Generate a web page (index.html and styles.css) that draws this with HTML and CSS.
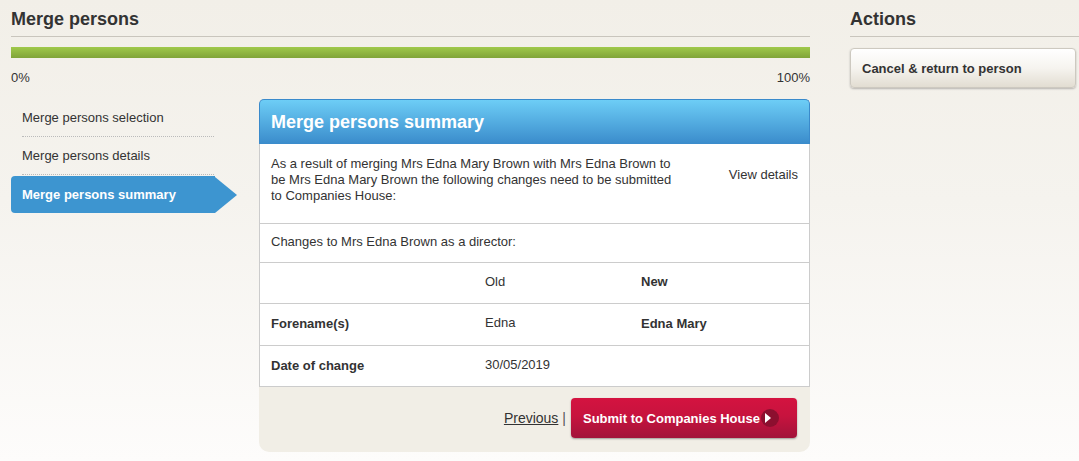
FILE: index.html
```html
<!DOCTYPE html>
<html>
<head>
<meta charset="utf-8">
<link rel="stylesheet" href="styles.css">
</head>
<body>
<div class="page">
  <div class="main">
    <h1 class="heading">Merge persons</h1>
    <div class="progress"><div class="progress-fill"></div></div>
    <div class="progress-labels"><span>0%</span><span>100%</span></div>
    <div class="content">
      <ul class="steps">
        <li class="step"><span class="step-text">Merge persons selection</span></li>
        <li class="step"><span class="step-text">Merge persons details</span></li>
        <li class="step step-active"><span class="step-text">Merge persons summary</span><span class="step-arrow"></span></li>
      </ul>
      <div class="panel">
        <div class="panel-head">Merge persons summary</div>
        <div class="panel-body">
          <div class="intro">
            <p class="intro-text">As a result of merging Mrs Edna Mary Brown with Mrs Edna Brown to be Mrs Edna Mary Brown the following changes need to be submitted to Companies House:</p>
            <a class="view-details">View details</a>
          </div>
          <div class="changes-title">Changes to Mrs Edna Brown as a director:</div>
          <div class="trow">
            <div class="c1"></div><div class="c2">Old</div><div class="c3 b">New</div>
          </div>
          <div class="trow">
            <div class="c1 b">Forename(s)</div><div class="c2">Edna</div><div class="c3 b">Edna Mary</div>
          </div>
          <div class="trow last">
            <div class="c1 b">Date of change</div><div class="c2">30/05/2019</div><div class="c3"></div>
          </div>
        </div>
        <div class="panel-foot">
          <a class="prev">Previous</a><span class="sep">|</span>
          <button class="submit">Submit to Companies House<span class="submit-icon"><svg width="8" height="10" viewBox="0 0 8 10"><polygon points="1,0 7,5 1,10" fill="#fff"/></svg></span></button>
        </div>
      </div>
    </div>
  </div>
  <div class="side">
    <h2 class="heading">Actions</h2>
    <button class="cancel">Cancel &amp; return to person</button>
  </div>
</div>
</body>
</html>
```
FILE: styles.css
```css
html, body {
  margin: 0;
  padding: 0;
}
body {
  font-family: "Liberation Sans", Arial, sans-serif;
  font-size: 13px;
  color: #333;
  background: linear-gradient(#f2efe8 0, #f5f3ee 200px, #fdfcfb 461px);
  min-height: 461px;
}
.page {
  display: flex;
  padding-left: 11px;
}
.main {
  width: 799px;
}
.side {
  margin-left: 40px;
  flex: 1;
}
.heading {
  margin: 0;
  padding-top: 8px;
  height: 28px;
  line-height: 22px;
  font-size: 18px;
  font-weight: bold;
  color: #333;
  border-bottom: 1px solid #c9c5bd;
}
.progress {
  margin-top: 10px;
  height: 11px;
}
.progress-fill {
  height: 100%;
  background: linear-gradient(#a0c94b, #80a439);
}
.progress-labels {
  display: flex;
  justify-content: space-between;
  margin-top: 12px;
  line-height: 16px;
}
.content {
  display: flex;
  align-items: flex-start;
  margin-top: 13px;
}
.steps {
  list-style: none;
  margin: 0;
  padding: 0;
  width: 226px;
  margin-right: 22px;
}
.step {
  height: 38px;
  display: flex;
  align-items: center;
}
.step-text {
  margin-left: 11px;
  width: 192px;
  height: 38px;
  line-height: 38px;
  border-bottom: 1px dotted #bbb;
  box-sizing: border-box;
  color: #333;
}
.step-active {
  margin-top: 1px;
  height: 37px;
}
.step-active .step-text {
  margin-left: 0;
  width: 204px;
  height: 37px;
  line-height: 37px;
  padding-left: 11px;
  border: none;
  background: #3d95d0;
  color: #fff;
  font-weight: bold;
  border-radius: 4px 0 0 4px;
}
.step-arrow {
  width: 0;
  height: 0;
  border-top: 18.5px solid transparent;
  border-bottom: 18.5px solid transparent;
  border-left: 22px solid #3d95d0;
}
.panel {
  width: 551px;
}
.panel-head {
  height: 45px;
  box-sizing: border-box;
  border: 1px solid #3a8acb;
  border-bottom: none;
  border-radius: 5px 5px 0 0;
  background: linear-gradient(#6dcdf6, #3a8bcb);
  color: #fff;
  font-size: 18px;
  font-weight: bold;
  line-height: 44px;
  padding-left: 11px;
}
.panel-body {
  background: #fff;
  border: 1px solid #ccc;
  border-top: none;
}
.intro {
  display: flex;
  justify-content: space-between;
  height: 80px;
  box-sizing: border-box;
  padding: 12px 11px 0 11px;
  border-bottom: 1px solid #ccc;
}
.intro-text {
  margin: 0;
  width: 410px;
  line-height: 16px;
}
.view-details {
  padding-top: 11px;
  line-height: 16px;
  color: #333;
}
.changes-title {
  height: 39px;
  box-sizing: border-box;
  line-height: 36px;
  padding-left: 11px;
  border-bottom: 1px solid #ccc;
}
.trow {
  display: flex;
  height: 41px;
  box-sizing: border-box;
  border-bottom: 1px solid #ccc;
  line-height: 38px;
}
.trow + .trow {
  height: 42px;
  line-height: 40px;
}
.trow.last {
  border-bottom: none;
  height: 40px;
}
.c1 {
  width: 214px;
  padding-left: 11px;
  box-sizing: border-box;
}
.c2 {
  width: 156px;
  padding-left: 11px;
  box-sizing: border-box;
}
.c3 {
  flex: 1;
  padding-left: 11px;
}
.trow .c2 {
  line-height: 37px;
}
.trow + .trow .c2 {
  line-height: 38px;
}
.b {
  font-weight: bold;
}
.panel-foot {
  height: 65px;
  background: #f1eee6;
  border-radius: 0 0 10px 10px;
  display: flex;
  justify-content: flex-end;
  align-items: flex-start;
  padding: 11px 13px 0 0;
  box-sizing: border-box;
}
.prev {
  color: #333;
  text-decoration: underline;
  line-height: 40px;
  font-size: 14px;
}
.sep {
  line-height: 40px;
  margin: 0 5px 0 4px;
  color: #555;
  font-size: 14px;
}
.submit {
  height: 40px;
  width: 226px;
  box-sizing: border-box;
  border: none;
  border-radius: 4px;
  background: linear-gradient(#d41340 0, #c7133e 45%, #a2133a 100%);
  box-shadow: 0 1px 2px rgba(0,0,0,0.35);
  color: #fff;
  font-family: "Liberation Sans", Arial, sans-serif;
  font-size: 13px;
  font-weight: bold;
  display: flex;
  align-items: center;
  padding: 0 0 0 12px;
}
.submit-icon {
  width: 18px;
  height: 18px;
  border-radius: 50%;
  background: #8c0f2f;
  display: inline-flex;
  align-items: center;
  justify-content: center;
  margin-left: 1px;
}
.submit-icon svg {
  margin-left: -4px;
}
.cancel {
  display: block;
  margin-top: 11px;
  width: 226px;
  height: 40px;
  box-sizing: border-box;
  border: 1px solid #cdc9c0;
  border-radius: 4px;
  background: linear-gradient(#ffffff 0, #f6f4ef 50%, #e2ddd2 100%);
  box-shadow: 0 1px 2px rgba(0,0,0,0.25);
  font-family: "Liberation Sans", Arial, sans-serif;
  font-size: 13px;
  font-weight: bold;
  color: #333;
  text-align: left;
  padding-left: 11px;
}
```
